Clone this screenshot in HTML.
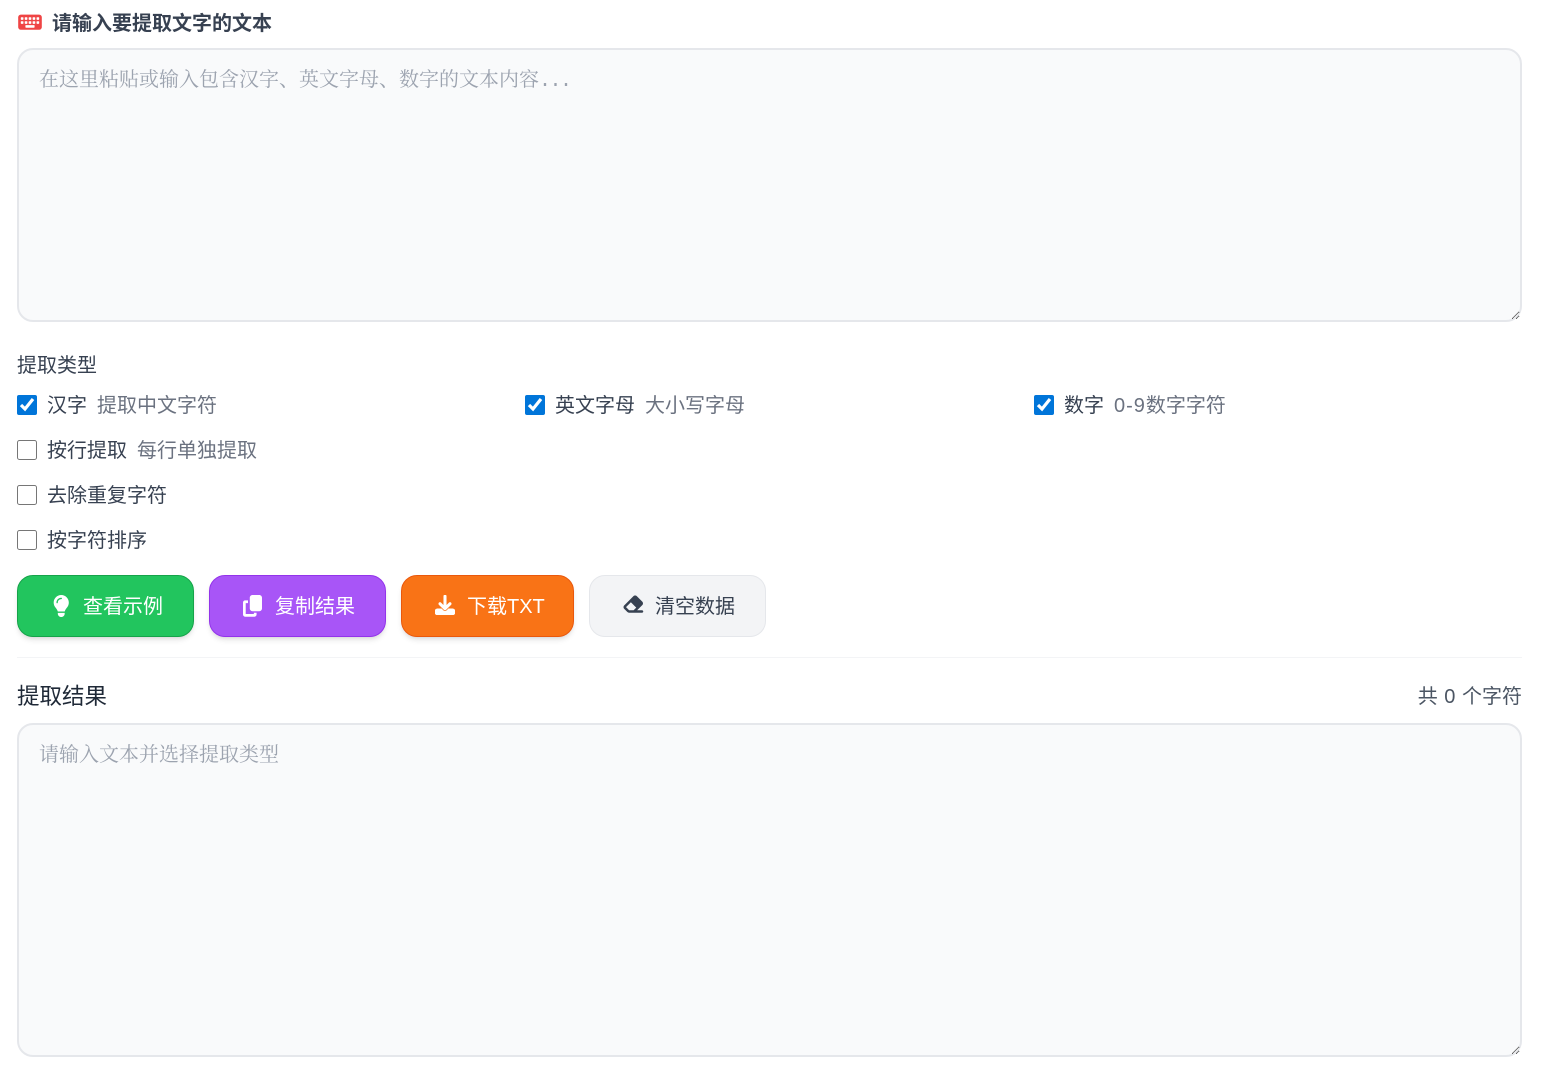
<!DOCTYPE html>
<html lang="zh-CN">
<head>
<meta charset="utf-8">
<title>文字提取</title>
<style>
*{box-sizing:border-box}
html,body{margin:0;padding:0;background:#fff;width:1542px;height:1075px;overflow:hidden}
body{font-family:"Liberation Sans","Noto Sans CJK SC",sans-serif;font-size:20px;color:#374151;position:relative}
.abs{position:absolute;white-space:nowrap;line-height:24px}
textarea{position:absolute;left:17px;width:1505px;background:#f9fafb;border:2px solid #e5e7eb;border-radius:16px;padding:18px 20px 16px 20px;margin:0;font-family:"Liberation Mono","Noto Serif CJK SC",serif;font-size:20px;line-height:28px;outline:none;display:block}
textarea::placeholder{color:#9ca3af;opacity:1}
.ph{position:absolute;left:39px;top:64px;line-height:28px;white-space:nowrap;color:#9ca3af;font-family:"Noto Serif CJK SC",serif;font-size:20px}
.ph span{font-family:"Liberation Mono",monospace;letter-spacing:-1.5px}
input[type=checkbox]{position:absolute;width:20px;height:20px;margin:0;accent-color:#0075d9}
.sub{color:#6b7280;margin-left:10px}
.btn{position:absolute;top:575px;height:62px;border-radius:16px;width:177px;border:1px solid;font-size:20px;color:#fff;box-shadow:0 4px 6px -1px rgba(0,0,0,.1),0 2px 4px -2px rgba(0,0,0,.1)}
.btn svg{position:absolute;display:block}
.btn span{position:absolute;top:19px;line-height:24px;white-space:nowrap}
</style>
</head>
<body>
<svg class="abs" style="left:18px;top:12px" width="24" height="21" viewBox="0 0 576 512"><rect x="0" y="64" width="576" height="370" rx="64" fill="#ef4444"/><g fill="#fff"><rect x="64" y="128" width="64" height="64" rx="14"/><rect x="160" y="128" width="64" height="64" rx="14"/><rect x="256" y="128" width="64" height="64" rx="14"/><rect x="352" y="128" width="64" height="64" rx="14"/><rect x="448" y="128" width="64" height="64" rx="14"/><rect x="64" y="224" width="64" height="64" rx="14"/><rect x="160" y="224" width="64" height="64" rx="14"/><rect x="256" y="224" width="64" height="64" rx="14"/><rect x="352" y="224" width="64" height="64" rx="14"/><rect x="448" y="224" width="64" height="64" rx="14"/><rect x="176" y="320" width="224" height="64" rx="14"/></g></svg>
<div class="abs" style="left:52px;top:12px;font-weight:700;color:#374151">请输入要提取文字的文本</div>
<textarea style="top:48px;height:274px"></textarea>
<div class="ph">在这里粘贴或输入包含汉字、英文字母、数字的文本内容<span>...</span></div>

<div class="abs" style="left:17px;top:354px">提取类型</div>

<input type="checkbox" checked style="left:17px;top:395px">
<div class="abs" style="left:47px;top:394px">汉字<span class="sub">提取中文字符</span></div>
<input type="checkbox" checked style="left:525px;top:395px">
<div class="abs" style="left:555px;top:394px">英文字母<span class="sub">大小写字母</span></div>
<input type="checkbox" checked style="left:1034px;top:395px">
<div class="abs" style="left:1064px;top:394px">数字<span class="sub"><span style="letter-spacing:1px">0-9</span>数字字符</span></div>

<input type="checkbox" style="left:17px;top:440px">
<div class="abs" style="left:47px;top:439px">按行提取<span class="sub">每行单独提取</span></div>
<input type="checkbox" style="left:17px;top:485px">
<div class="abs" style="left:47px;top:484px">去除重复字符</div>
<input type="checkbox" style="left:17px;top:530px">
<div class="abs" style="left:47px;top:529px">按字符排序</div>

<div class="btn" style="left:17px;background:#22c55e;border-color:#16a34a">
<svg style="left:35px;top:19px" width="16.500" height="22" viewBox="0 0 384 512"><path fill="#fff" d="M272 384c9.600-31.900 29.500-59.100 49.200-86.200c5.200-7.100 10.400-14.200 15.400-21.400c19.800-28.500 31.400-63 31.400-100.300C368 78.800 289.200 0 192 0S16 78.800 16 176c0 37.300 11.600 71.900 31.400 100.300c5 7.200 10.200 14.300 15.400 21.400c19.800 27.100 39.700 54.400 49.200 86.200H272zM192 512c44.200 0 80-35.800 80-80V416H112v16c0 44.200 35.800 80 80 80zM112 176c0 8.800-7.200 16-16 16s-16-7.200-16-16c0-61.900 50.100-112 112-112c8.800 0 16 7.200 16 16s-7.200 16-16 16c-44.200 0-80 35.800-80 80z"/></svg>
<span style="left:65px">查看示例</span></div>

<div class="btn" style="left:209px;background:#a855f7;border-color:#9333ea">
<svg style="left:33px;top:19px" width="19" height="21.700" viewBox="0 0 448 512"><path fill="#fff" d="M224 0H384c35 0 64 29 64 64V320c0 35-29 64-64 64H224c-35 0-64-29-64-64V64c0-35 29-64 64-64zM48 128h70v64H64V448H256V420h64v44c0 26.500-21.500 48-48 48H48c-26.500 0-48-21.500-48-48V176c0-26.500 21.500-48 48-48z"/></svg>
<span style="left:65px">复制结果</span></div>

<div class="btn" style="left:401px;width:173px;background:#f97316;border-color:#ea580c">
<svg style="left:33px;top:19px" width="20" height="20" viewBox="0 0 512 512"><path fill="#fff" stroke="#fff" stroke-width="14" d="M288 32c0-17.700-14.300-32-32-32s-32 14.300-32 32V274.700l-73.400-73.400c-12.500-12.500-32.800-12.500-45.300 0s-12.500 32.800 0 45.300l128 128c12.500 12.500 32.800 12.500 45.300 0l128-128c12.500-12.500 12.500-32.800 0-45.300s-32.800-12.500-45.300 0L288 274.700V32zM64 352c-35.300 0-64 28.700-64 64v32c0 35.300 28.700 64 64 64H448c35.300 0 64-28.700 64-64V416c0-35.300-28.700-64-64-64H346.500l-45.300 45.300c-25 25-65.500 25-90.500 0L165.500 352H64z"/></svg>
<span style="left:65px">下载TXT</span></div>

<div class="btn" style="left:589px;background:#f3f4f6;border-color:#e5e7eb;color:#374151;box-shadow:none">
<svg style="left:32px;top:18px" width="22.500" height="20" viewBox="0 0 576 512"><path fill="#374151" d="M290.700 57.400L57.400 290.700c-25 25-25 65.500 0 90.500l80 80c12 12 28.300 18.700 45.300 18.700H288h9.400H512c17.700 0 32-14.300 32-32s-14.300-32-32-32H387.900L518.600 285.300c25-25 25-65.500 0-90.500L381.300 57.400c-25-25-65.500-25-90.500 0zM297.400 416H288l-105.400 0-80-80L227.300 211.300 364.700 348.700 297.400 416z"/></svg>
<span style="left:65px">清空数据</span></div>

<div style="position:absolute;left:17px;top:657px;width:1505px;height:1px;background:#f3f4f6"></div>

<div class="abs" style="left:17px;top:685px;font-size:22.500px;color:#1f2937">提取结果</div>
<div class="abs" style="right:20px;top:685px;color:#4b5563;word-spacing:1px">共 0 个字符</div>

<textarea style="top:723px;height:334px" placeholder="请输入文本并选择提取类型"></textarea>
</body>
</html>
